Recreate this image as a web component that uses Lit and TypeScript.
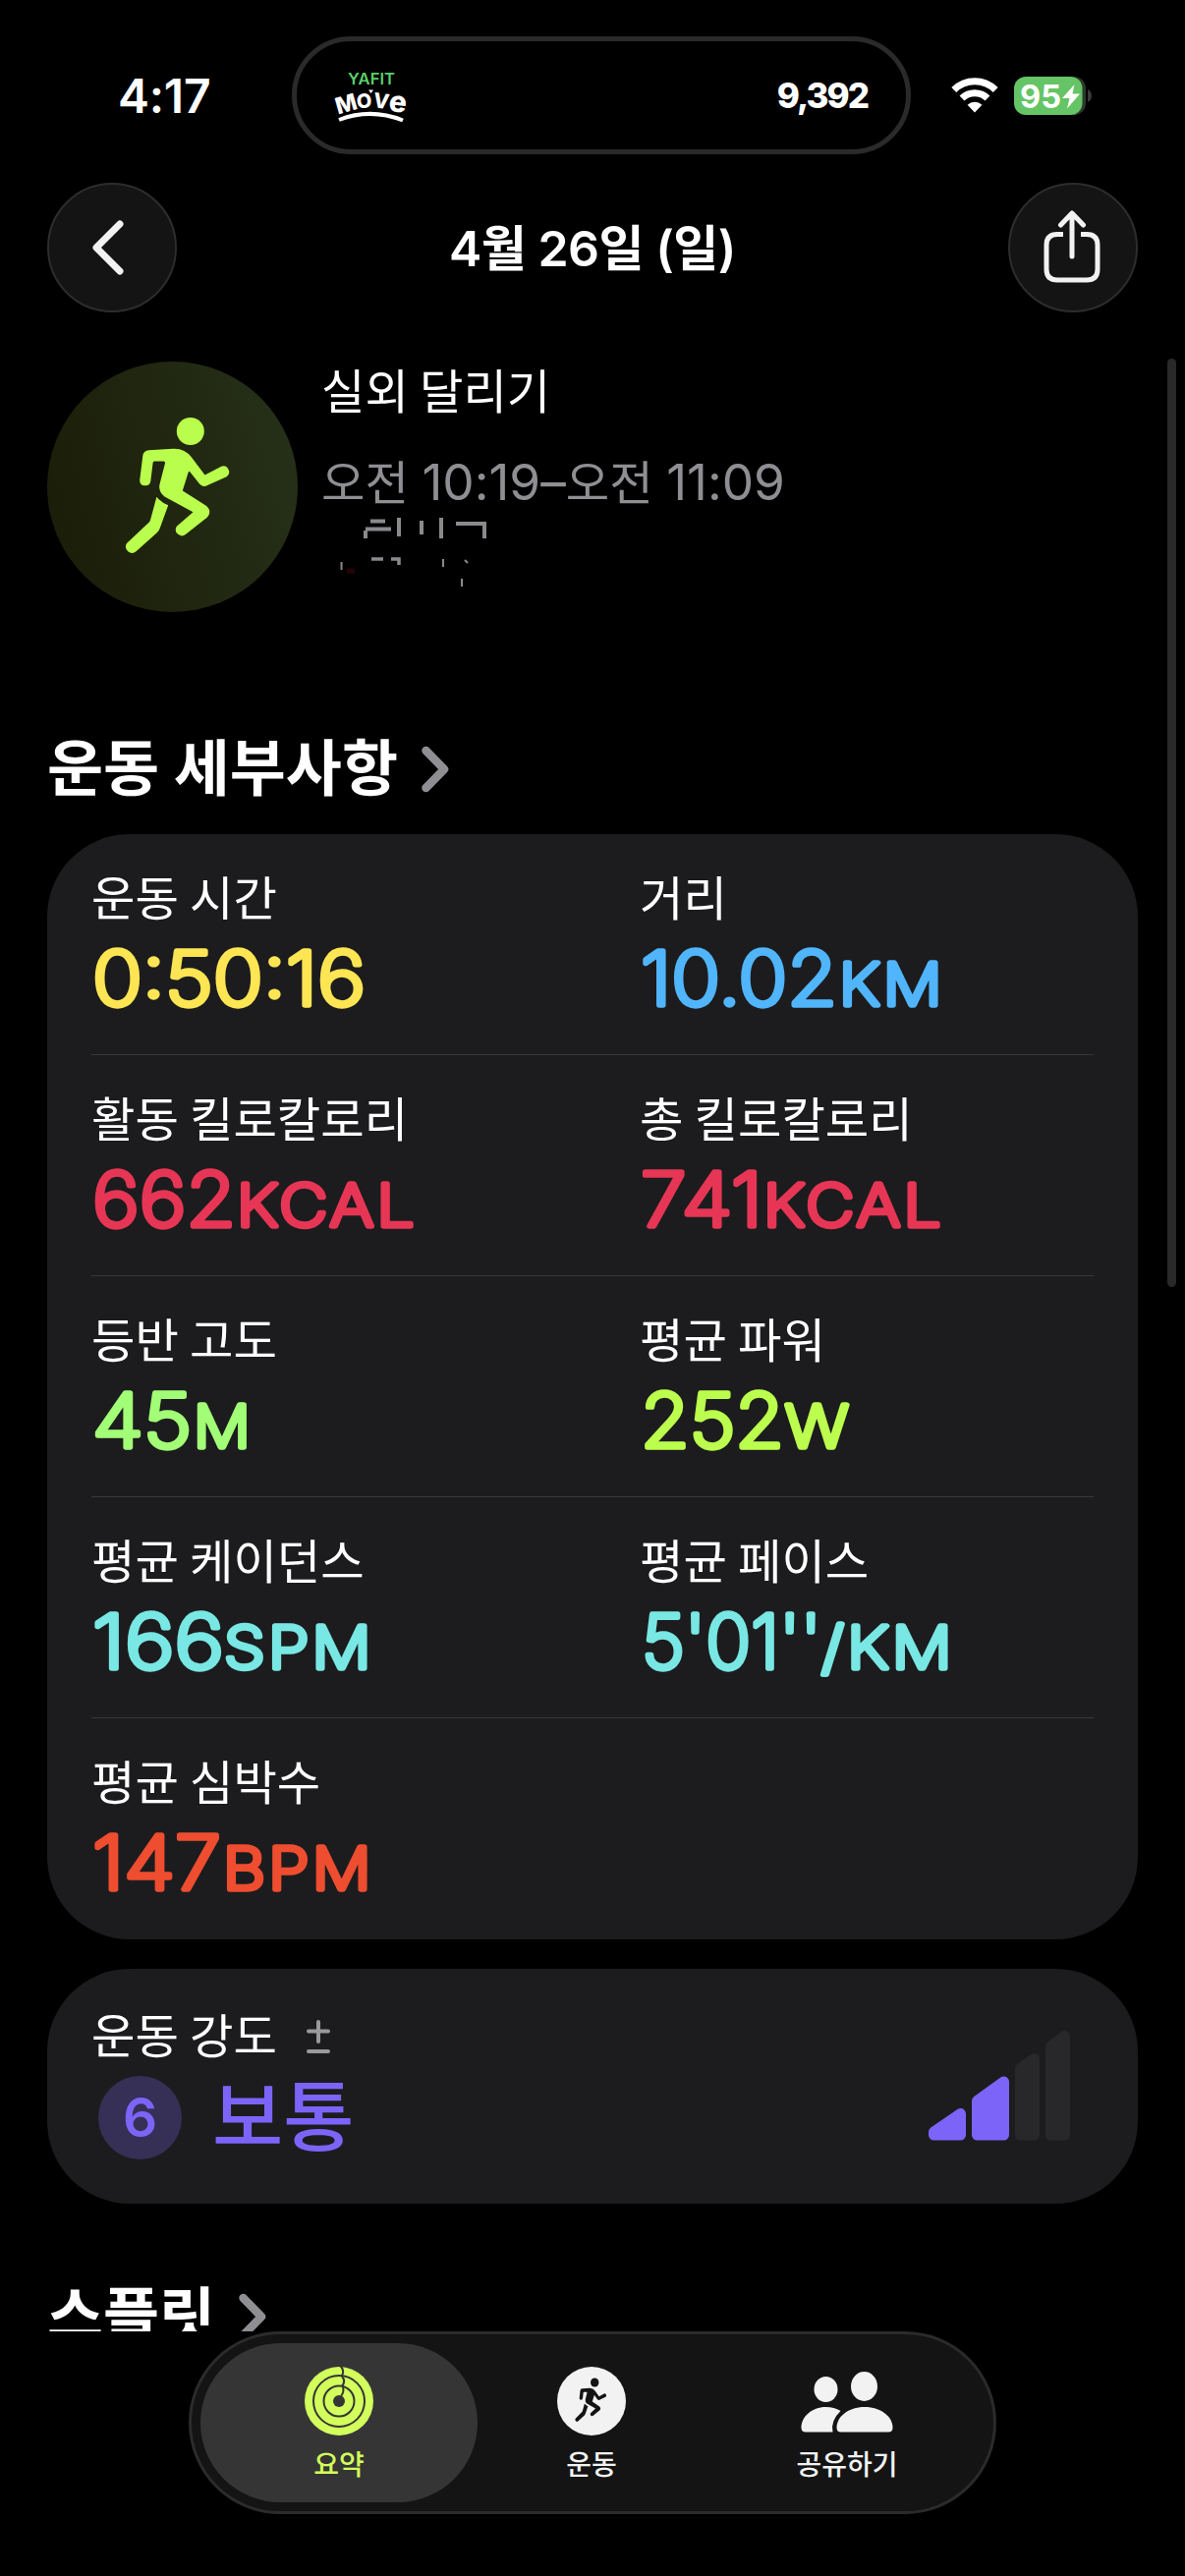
import { LitElement, html, svg, css } from "lit";
import { customElement, property } from "lit/decorators.js";

type Run = { t: string; x: number; w: number; unit?: boolean };
type Metric = { label: string; color: string; runs: Run[] };

/* x and w of each run are measured from the left edge of its column */
const METRICS: Metric[] = [
  { label: "운동 시간", color: "#fde553", runs: [{ t: "0:50:16", x: 1, w: 278 }] },
  { label: "거리", color: "#51b5fb", runs: [{ t: "10.02", x: 1, w: 200 }, { t: "KM", x: 203, w: 108, unit: true }] },
  { label: "활동 킬로칼로리", color: "#e73655", runs: [{ t: "662", x: 1, w: 146 }, { t: "KCAL", x: 148, w: 184, unit: true }] },
  { label: "총 킬로칼로리", color: "#e73655", runs: [{ t: "741", x: 1, w: 124 }, { t: "KCAL", x: 126, w: 184, unit: true }] },
  { label: "등반 고도", color: "#a2fe76", runs: [{ t: "45", x: 1, w: 101 }, { t: "M", x: 104, w: 61, unit: true }] },
  { label: "평균 파워", color: "#bcfe4e", runs: [{ t: "252", x: 1, w: 146 }, { t: "W", x: 148, w: 68, unit: true }] },
  { label: "평균 케이던스", color: "#79e7e3", runs: [{ t: "166", x: 1, w: 134 }, { t: "SPM", x: 135, w: 153, unit: true }] },
  { label: "평균 페이스", color: "#79e7e3", runs: [{ t: "5'01''", x: 2, w: 183 }, { t: "/KM", x: 185, w: 136, unit: true }] },
  { label: "평균 심박수", color: "#ee4d30", runs: [{ t: "147", x: 1, w: 131 }, { t: "BPM", x: 134, w: 154, unit: true }] },
];

const runner = (fill: string) => svg`
  <g fill=${fill}>
    <ellipse cx="145.8" cy="71" rx="14" ry="14"/>
    <path d="M103.5 90.3 L128 88.7 Q140 88 147 97.5 L160.5 115.4 L177.3 106.8 A5.9 5.9 0 0 1 182.6 117.2 L162 126.4 Q158 128 155 124.6 L145.5 112.4 Q144.3 111 143.6 113 L137.8 131.5 L161 146.2 Q168.5 151.5 163 158.6 L140.8 176 A6.2 6.2 0 0 1 131.8 167.8 L148.5 153.3 L119.5 137.5 Q113 132.5 114.4 125.3 L120 103.5 Q120.3 101.3 118.5 101.4 L109 101.6 Q107.8 101.7 107.6 103 L105.3 121.8 A5.6 5.6 0 0 1 94.2 120.9 L97.3 96 Q98 90.7 103.5 90.3Z"/>
    <path d="M111.4 137.7 Q116 143.5 123.2 146.2 L114.6 170 Q113.8 172 112 174 L90.500 193.300 A6.4 6.4 0 0 1 81 185 L103.8 163.5 Q105 162 105.4 160Z"/>
  </g>`;

const chevronRight = html`<svg width="30" height="50" viewBox="0 0 30 50" fill="none" stroke="#8e8e93" stroke-width="8.500" stroke-linecap="round" stroke-linejoin="round"><path d="M4.500 6L23 25L4.500 44"/></svg>`;

@customElement("metric-cell")
export class MetricCell extends LitElement {
  @property({ attribute: false }) metric!: Metric;

  static styles = css`
    :host { display: block; padding-top: 32px; }
    .label { font-size: 48.3px; line-height: 68px; height: 67px; word-spacing: -2.5px; color: #fff; white-space: nowrap; }
    svg { display: block; overflow: visible; }
    text { font-family: Inter, sans-serif; font-weight: 200; stroke-linejoin: round; }
    .num { font-size: 75.5px; stroke-width: 5.3px; }
    .unit { font-size: 59px; letter-spacing: 3px; stroke-width: 5.4px; }
  `;

  render() {
    const m = this.metric;
    return html`
      <div class="label">${m.label}</div>
      <svg width="450" height="90" viewBox="0 0 450 90" fill=${m.color} stroke=${m.color}>
        ${m.runs.map((r) => svg`<text class=${r.unit ? "unit" : "num"} x=${r.x} y="75" textLength=${r.w} lengthAdjust="spacingAndGlyphs">${r.t}</text>`)}
      </svg>`;
  }
}

@customElement("app-root")
export class AppRoot extends LitElement {
  static styles = css`
    :host { display: block; position: relative; width: 1206px; height: 2622px; overflow: hidden; background: #000; color: #fff; font-family: Inter, "Noto Sans CJK KR", sans-serif; }
    * { box-sizing: border-box; }
    svg { display: block; overflow: visible; }
    .status { display: flex; align-items: center; height: 157px; padding-top: 37px; }
    .time { width: 297px; padding-left: 120px; padding-bottom: 2px; font-size: 48px; font-weight: 600; letter-spacing: -0.2px; line-height: 60px; margin-top: 4px; }
    .island { width: 630px; height: 120px; border: 5px solid #2a2a2a; border-radius: 60px; display: flex; justify-content: space-between; align-items: center; padding: 0 39px; }
    .steps { font-size: 35px; font-weight: 800; letter-spacing: -2px; line-height: 40px; }
    .signal { display: flex; align-items: center; padding-left: 41px; gap: 16px; }
    .nav { display: flex; justify-content: space-between; align-items: center; margin-top: 29px; padding: 0 48px; height: 132px; }
    .round { width: 132px; height: 132px; border-radius: 50%; background: #141414; border: 2px solid #2d2d2d; display: grid; place-items: center; }
    .back { padding-right: 9px; }
    .share { padding: 0 2px 2px 0; }
    .title { padding-top: 2px; font-size: 50px; font-weight: 600; letter-spacing: -0.5px; line-height: 64px; white-space: nowrap; }
    .content { height: 2055px; overflow: hidden; padding: 0 48px; }
    .summary { display: flex; gap: 24px; padding-top: 50px; height: 416px; }
    .badge { width: 255px; height: 255px; flex: none; border-radius: 50%; background: linear-gradient(75deg, #1a1c06, #27311a); }
    .kind { font-size: 48.3px; line-height: 62px; word-spacing: -2.5px; white-space: nowrap; }
    .when { font-size: 48.3px; line-height: 62px; height: 62px; margin-top: 29px; color: #8e8e93; white-space: nowrap; }
    .clock { font-size: 51.3px; }
    .heading { display: flex; align-items: center; gap: 24px; height: 98px; font-size: 62px; font-weight: 700; line-height: 90px; white-space: nowrap; }
    .card { background: #1c1c1e; border-radius: 84px; }
    .metrics { padding: 0 45px; margin-top: 17px; }
    .row { display: grid; grid-template-columns: 558px 462px; height: 225px; border-bottom: 1px solid #38383a; }
    .row:last-child { border-bottom: 0; }
    .effort { display: flex; justify-content: space-between; margin-top: 30px; height: 239px; padding: 36px 69px 0 45px; }
    .effort-label { display: flex; align-items: center; gap: 29px; font-size: 48.3px; line-height: 66px; height: 66px; word-spacing: -2.5px; }
    .level { display: flex; align-items: center; gap: 31px; padding-left: 7px; margin-top: 7px; color: #7d64f9; font-size: 78.5px; font-weight: 500; line-height: 85px; }
    .dot { width: 85px; height: 85px; border-radius: 50%; background: #362f56; font-size: 55px; font-weight: 600; text-align: center; line-height: 85px; }
    .bars { margin-top: 27px; }
    .splits { margin-top: 66px; }
    .scrollbar { position: absolute; left: 1188px; top: 365px; width: 9px; height: 945px; border-radius: 5px; background: #29292a; }
    .tabs { position: absolute; left: 192px; top: 2373px; width: 822px; height: 186px; border-radius: 93px; background: #141414; border: 3px solid #2b2b2b; display: flex; padding: 9px; }
    .tab { width: 282px; height: 162px; flex: none; margin-right: -25px; border-radius: 81px; display: flex; flex-direction: column; align-items: center; padding-top: 24px; font-size: 28px; font-weight: 500; line-height: 40px; color: #f2f2f2; }
    .tab + .tab { margin-right: -22px; }
    .tab.on { background: #353535; color: #d3ff5c; }
    .tab span { margin-top: 10px; }
  `;

  render() {
    const rows: Metric[][] = [];
    for (let i = 0; i < METRICS.length; i += 2) rows.push(METRICS.slice(i, i + 2));
    return html`
      <div class="status">
        <div class="time">4:17</div>
        <div class="island">
          <svg width="74" height="50" viewBox="0 0 74 50">
            <text x="13" y="14" textLength="48" lengthAdjust="spacingAndGlyphs" font-family="Inter, sans-serif" font-size="15.5" font-weight="600" fill="#5ad168">YAFIT</text>
            <g fill="#fff" font-family="Inter, sans-serif" font-weight="800">
              <text font-size="23" transform="translate(3 44.500) rotate(-16)">M</text>
              <text font-size="20" transform="translate(22.500 38.500) rotate(-5)">O</text>
              <text font-size="21" transform="translate(38 37) rotate(8)">V</text>
              <text font-size="30" transform="translate(54 41) rotate(6)">e</text>
            </g>
            <path d="M34 19.500h5L36.500 23Z" fill="#fff"/>
            <path d="M4 50Q36 37.500 69 50.500" fill="none" stroke="#fff" stroke-width="4"/>
          </svg>
          <div class="steps">9,392</div>
        </div>
        <div class="signal">
          <svg width="48" height="36" viewBox="0 0 48 36" fill="none" stroke="#fff" stroke-width="7">
            <path d="M2.8 12.6A30 30 0 0 1 45.2 12.6"/>
            <path d="M11 21A18.5 18.5 0 0 1 37 21"/>
            <path d="M24 35.5L16.6 27.8A10.5 10.5 0 0 1 31.4 27.8Z" fill="#fff" stroke="none"/>
          </svg>
          <svg width="79" height="39" viewBox="0 0 79 39">
            <path d="M60 0h1a12 12 0 0 1 12 12v15a12 12 0 0 1-12 12h-1z" fill="#2c3a2d"/>
            <rect width="69.5" height="39" rx="12" fill="#65c466"/>
            <path d="M75 13q4 2 4 6.500t-4 6.500z" fill="#3a3a3c"/>
            <text x="6" y="31.500" font-family="Inter, sans-serif" font-size="33" font-weight="700" fill="#fff" textLength="42" lengthAdjust="spacingAndGlyphs">95</text>
            <path d="M61.500 8L49 22h7.500L54 32.500L67 17.500h-7.500z" fill="#fff"/>
          </svg>
        </div>
      </div>

      <div class="nav">
        <div class="round back"><svg width="34" height="56" viewBox="0 0 34 56" fill="none" stroke="#f2f2f2" stroke-width="7" stroke-linecap="round" stroke-linejoin="round"><path d="M29 4L5 28L29 52"/></svg></div>
        <div class="title">4월 26일 (일)</div>
        <div class="round share"><svg width="58" height="74" viewBox="0 0 58 74" fill="none" stroke="#f2f2f2" stroke-width="5" stroke-linecap="round" stroke-linejoin="round"><path d="M20 24.500H14Q3 24.500 3 35.500V60Q3 71 14 71H44Q55 71 55 60V35.500Q55 24.500 44 24.500H38" stroke-linecap="butt"/><path d="M29 47V4M17.500 15L29 3L40.500 15"/></svg></div>
      </div>

      <div class="content">
        <div class="summary">
          <div class="badge"><svg width="255" height="255" viewBox="0 0 255 255">${runner("#bafe4d")}</svg></div>
          <div>
            <div class="kind">실외 달리기</div>
            <div class="when">오전 <span class="clock">10:19–</span>오전 <span class="clock">11:09</span></div>
            <svg width="180" height="90" viewBox="0 0 180 90" fill="none" stroke="#8a8a8e" stroke-width="4">
              <path d="M50 9.500h15M45 17.500h26M45 19v8M79 6v19M102 9v14M122 6v21M137 12h29v15"/>
              <path d="M51 48h12M71 48h8v6" stroke-width="3.500"/>
              <path d="M20.500 51v8M124 48v8M146 49l3 3M143 68v8" stroke-width="2"/>
              <path d="M26 60h8" stroke="#250303" stroke-width="5"/>
            </svg>
          </div>
        </div>

        <div class="heading"><span>운동 세부사항</span>${chevronRight}</div>
        <div class="card metrics">
          ${rows.map((r) => html`<div class="row">${r.map((m) => html`<metric-cell .metric=${m}></metric-cell>`)}</div>`)}
        </div>

        <div class="card effort">
          <div>
            <div class="effort-label"><span>운동 강도</span>
              <svg width="26" height="36" viewBox="0 0 26 36" fill="none" stroke="#98989d" stroke-width="4" stroke-linecap="round"><path d="M3 12.500h20M13 3v20M3 33h20"/></svg>
            </div>
            <div class="level"><div class="dot">6</div><span>보통</span></div>
          </div>
          <svg class="bars" width="144" height="112" viewBox="0 0 144 112" stroke-width="11" stroke-linejoin="round">
            <g fill="#7d64f9" stroke="#7d64f9">
              <path d="M5.500 103L32.500 84.500V106H5.500Z"/>
              <path d="M49.500 71.500L76.500 52V106H49.500Z"/>
            </g>
            <g fill="#28282a" stroke="#28282a">
              <path d="M93.500 38.500L107.500 28.500V106H93.500Z"/>
              <path d="M124.500 16L138.500 5.500V106H124.500Z"/>
            </g>
          </svg>
        </div>

        <div class="heading splits"><span>스플릿</span>${chevronRight}</div>
      </div>

      <div class="scrollbar"></div>

      <div class="tabs">
        <div class="tab on">
          <svg width="70" height="70" viewBox="0 0 70 70">
            <circle cx="35" cy="35" r="35" fill="#d3ff5c"/>
            <g fill="none" stroke="#353535" stroke-width="2">
              <circle cx="35" cy="35" r="26"/><circle cx="35" cy="35" r="15.500"/>
              <path d="M36 -1Q40.500 3 38.500 8Q37.500 10 40 13Q40.500 17 38.500 19Q41 25 37 30" />
            </g>
            <circle cx="35" cy="35" r="6" fill="#353535"/>
          </svg>
          <span>요약</span>
        </div>
        <div class="tab">
          <svg width="70" height="70" viewBox="0 0 70 70"><circle cx="35" cy="35" r="35" fill="#f2f2f2"/><g transform="translate(-5.800 -6.900) scale(.302 .322)">${runner("#141414")}</g></svg>
          <span>운동</span>
        </div>
        <div class="tab">
          <svg width="94" height="70" viewBox="0 -1 94 70" fill="#f2f2f2">
            <ellipse cx="25.500" cy="22" rx="12" ry="13"/>
            <path d="M5 65.500Q.5 65.500 .5 61C.5 50 11 40 25.500 40Q34 40 40.500 44Q30 54 32.500 65.500Z"/>
            <ellipse cx="64.500" cy="19" rx="13.500" ry="15"/>
            <path d="M41 65.500Q36.500 65.500 36.500 61C36.500 50 48 40 65 40S93.500 50 93.500 61Q93.500 65.500 89 65.500Z"/>
          </svg>
          <span>공유하기</span>
        </div>
      </div>
    `;
  }
}
